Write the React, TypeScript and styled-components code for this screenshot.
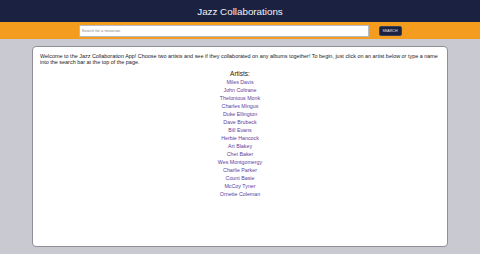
import React from "react";
import styled, { createGlobalStyle } from "styled-components";

const GlobalStyle = createGlobalStyle`
  html, body {
    margin: 0;
    padding: 0;
    height: 100%;
  }
  body {
    font-family: "Liberation Sans", Arial, sans-serif;
    background-color: #c9c9d1;
  }
  #root {
    height: 100%;
  }
`;

const Page = styled.div`
  display: flex;
  flex-direction: column;
  height: 100vh;
`;

const Header = styled.header`
  background-color: #1b2140;
  height: 22px;
  display: flex;
  align-items: center;
  justify-content: center;
`;

const Title = styled.h1`
  margin: 0;
  color: #f2f2f5;
  font-size: 9.8px;
  font-weight: normal;
`;

const SearchBar = styled.div`
  background-color: #f39c1e;
  height: 17px;
  display: flex;
  align-items: center;
  justify-content: center;
  gap: 10px;
`;

const SearchInput = styled.input`
  box-sizing: border-box;
  width: 290px;
  height: 12px;
  padding: 0 2px;
  border: 1px solid #b9b9c0;
  background: #fff;
  font-family: "Liberation Sans", Arial, sans-serif;
  font-size: 4px;
  outline: none;
  &::placeholder {
    color: #888;
  }
`;

const SearchButton = styled.button`
  box-sizing: border-box;
  width: 23px;
  height: 10px;
  padding: 0;
  border: 1px solid #39405e;
  border-radius: 2px;
  background-color: #1b2140;
  color: #e8e8ee;
  font-family: "Liberation Sans", Arial, sans-serif;
  font-size: 3.6px;
`;

const Main = styled.main`
  flex: 1;
  display: flex;
  padding: 7px 32px 7px 32px;
  min-height: 0;
`;

const Card = styled.section`
  flex: 1;
  background: #fff;
  border: 1px solid #8e8e96;
  border-radius: 4px;
  padding: 6px 7px;
  color: #222;
`;

const Intro = styled.p`
  margin: 0;
  font-size: 5.45px;
  line-height: 6.3px;
`;

const ArtistsHeading = styled.h2`
  margin: 4px 0 0;
  text-align: center;
  font-size: 6.5px;
  line-height: 8px;
  font-weight: normal;
`;

const ArtistList = styled.ul`
  list-style: none;
  margin: 0;
  padding: 0;
  text-align: center;
`;

const ArtistItem = styled.li`
  font-size: 5.3px;
  line-height: 8px;
  color: #5e3d9c;
  cursor: pointer;
`;

const artists = [
  "Miles Davis",
  "John Coltrane",
  "Thelonious Monk",
  "Charles Mingus",
  "Duke Ellington",
  "Dave Brubeck",
  "Bill Evans",
  "Herbie Hancock",
  "Art Blakey",
  "Chet Baker",
  "Wes Montgomergy",
  "Charlie Parker",
  "Count Basie",
  "McCoy Tyner",
  "Ornette Coleman",
];

const App: React.FC = () => {
  return (
    <>
      <GlobalStyle />
      <Page>
        <Header>
          <Title>Jazz Collaborations</Title>
        </Header>
        <SearchBar>
          <SearchInput placeholder="Search for a musician" />
          <SearchButton>SEARCH</SearchButton>
        </SearchBar>
        <Main>
          <Card>
            <Intro>
              Welcome to the Jazz Collaboration App! Choose two artists and see
              if they collaborated on any albums together! To begin, just click
              on an artist below or type a name into the search bar at the top
              of the page.
            </Intro>
            <ArtistsHeading>Artists:</ArtistsHeading>
            <ArtistList>
              {artists.map((name) => (
                <ArtistItem key={name}>{name}</ArtistItem>
              ))}
            </ArtistList>
          </Card>
        </Main>
      </Page>
    </>
  );
};

export default App;
